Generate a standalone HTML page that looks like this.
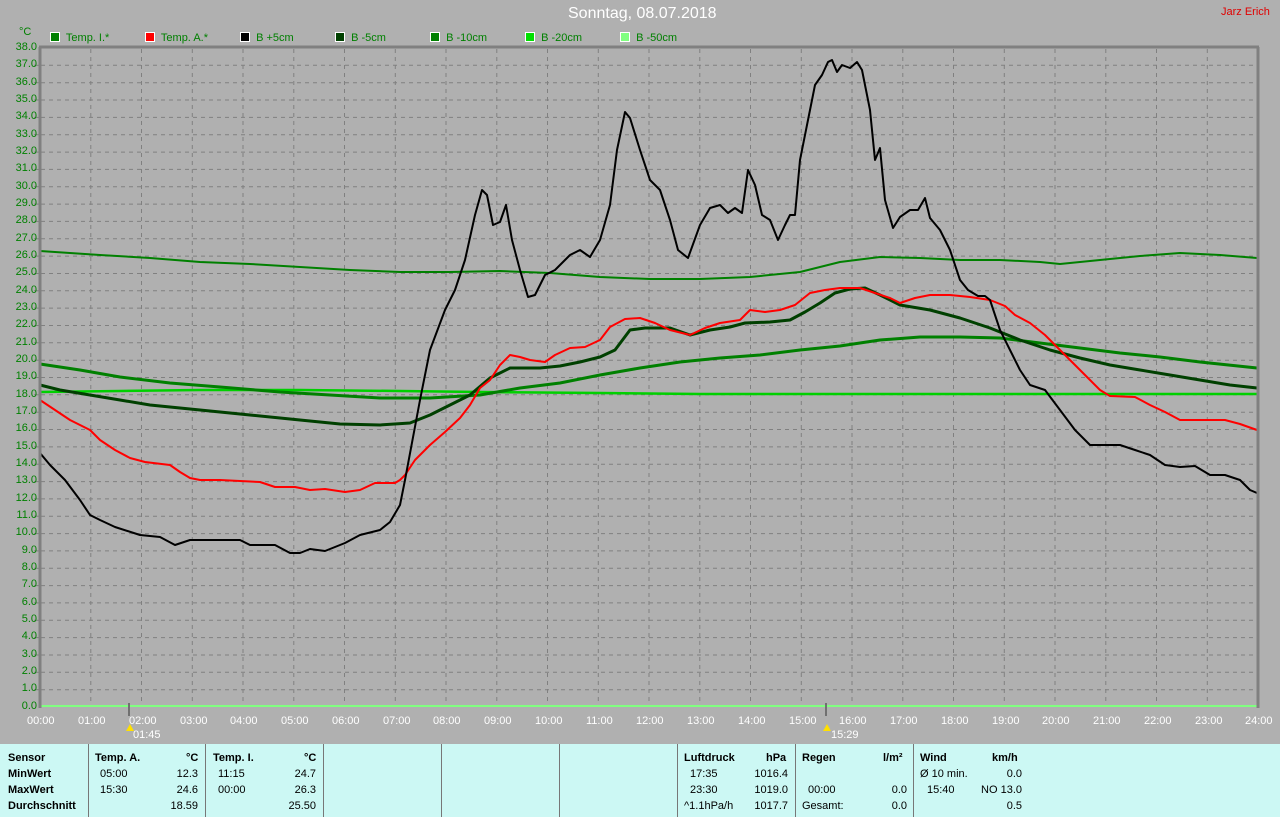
<!DOCTYPE html>
<html><head><meta charset="utf-8"><style>
body{margin:0;width:1280px;height:817px;background:#b0b0b0;overflow:hidden;position:relative;font-family:"Liberation Sans",sans-serif}
.t{position:absolute;font-size:11px;white-space:nowrap}
#bot{position:absolute;left:0;top:744px;width:1280px;height:73px;background:#ccf8f4;font-size:11px}
.sep{position:absolute;top:0;width:1px;height:73px;background:#777}
.c{position:absolute;white-space:nowrap}
.b{font-weight:bold}
</style></head><body>
<div class="t" style="left:568px;top:5px;font-size:16px;color:#fff">Sonntag, 08.07.2018</div>
<div class="t" style="left:1221px;top:6px;color:#e00000">Jarz Erich</div>
<div class="t" style="left:19px;top:26px;color:#008000">°C</div>
<svg width="1280" height="817" style="position:absolute;left:0;top:0" id="s">
<g id="g"></g>
<g fill="none" stroke-linejoin="round">
<polyline stroke="#80ff80" stroke-width="2" points="41,706 1257,706"/>
<polyline stroke="#00d000" stroke-width="2.5" points="40,392 120,391 200,390 300,390 400,391 480,392 600,393 700,394 1257,394"/>
<polyline stroke="#008000" stroke-width="3" points="40,364 80,370 120,377 170,383 220,387 280,392 330,395 380,398 430,398 480,395 520,388 560,383 600,375 640,368 680,362 720,358 760,355 800,350 840,346 880,340 920,337 960,337 1000,338 1040,343 1080,348 1120,353 1160,357 1200,362 1257,368"/>
<polyline stroke="#008000" stroke-width="2" points="40,251 100,255 150,258 200,262 250,264 300,267 350,270 400,272 450,272 500,271 550,273 600,277 650,279 700,279 750,277 800,272 840,262 880,257 920,258 960,260 1000,260 1040,262 1060,264 1100,260 1140,256 1180,253 1220,255 1257,258"/>
<polyline stroke="#004000" stroke-width="3" points="40,385 60,390 90,395 120,400 150,405 200,410 250,415 300,420 340,424 380,425 410,423 430,415 450,405 470,395 490,378 510,368 540,368 560,366 580,362 600,357 615,350 630,330 645,328 670,328 690,335 710,330 730,327 745,323 770,322 790,320 805,312 820,303 835,293 850,289 865,288 880,295 900,305 930,310 960,318 990,328 1020,340 1050,350 1080,358 1110,365 1140,370 1170,375 1200,380 1230,385 1257,388"/>
<polyline stroke="#ff0000" stroke-width="2" points="40,400 55,410 70,420 90,430 100,440 115,450 130,458 145,462 170,465 180,472 190,478 200,480 220,480 240,481 260,482 275,487 295,487 310,490 325,489 345,492 360,490 375,483 395,483 400,480 405,475 415,460 430,445 445,432 460,418 470,405 480,388 490,380 500,365 510,355 520,357 530,360 545,362 555,355 570,348 585,347 600,340 610,327 625,319 640,318 655,323 670,330 690,335 705,328 720,323 740,320 750,310 765,312 780,310 795,305 810,293 825,290 840,288 860,288 875,293 890,298 900,303 915,298 930,295 950,295 970,297 990,300 1005,306 1015,315 1030,323 1045,335 1060,350 1075,365 1090,380 1100,390 1110,396 1135,397 1150,405 1165,412 1180,420 1210,420 1225,420 1240,424 1257,430"/>
<polyline stroke="#000" stroke-width="2" points="40,453 50,465 65,480 80,500 90,515 100,520 115,527 140,535 160,537 175,545 190,540 240,540 250,545 275,545 290,553 300,553 310,549 325,551 345,543 360,535 380,530 390,522 400,505 405,480 420,400 430,350 445,310 450,300 455,290 465,260 475,215 482,190 487,195 493,225 500,222 506,205 512,240 520,270 528,297 535,295 545,275 555,270 570,255 580,250 590,257 600,240 610,205 617,150 625,112 630,118 640,150 650,180 660,190 670,220 678,250 688,258 700,225 710,208 720,205 728,213 735,208 742,213 748,170 755,185 762,215 770,220 778,240 785,225 790,215 795,215 800,160 808,120 815,85 822,75 828,62 832,60 837,72 842,65 850,68 857,62 862,70 870,110 875,160 880,148 885,200 893,228 900,217 910,210 918,210 925,198 930,218 940,230 950,250 960,280 968,290 978,296 985,296 990,300 1000,330 1010,350 1020,370 1030,385 1045,390 1060,410 1075,430 1090,445 1120,445 1135,450 1150,455 1165,465 1180,467 1195,466 1210,475 1225,475 1240,480 1250,490 1257,493"/>
</g>
<g stroke="#808080" stroke-width="3" fill="none"><line x1="40" y1="47" x2="40" y2="708"/><line x1="39" y1="47" x2="1259" y2="47"/><line x1="1258" y1="47" x2="1258" y2="708"/></g>
<g stroke="#707070" stroke-width="2"><line x1="129" y1="703" x2="129" y2="716"/><line x1="826" y1="703" x2="826" y2="716"/></g>
<polygon points="126,731 130,724 134,731" fill="#ffe000"/><polygon points="823,731 827,724 831,731" fill="#ffe000"/>
<g font-family="Liberation Sans" font-size="11">
<g fill="#fff"><text x="133" y="738">01:45</text><text x="831" y="738">15:29</text></g>
</g>
</svg>
<div id="lab"></div>
<div class="t" style="left:50px;top:32px;color:#008000"><span style="display:inline-block;width:8px;height:8px;background:#008000;border:1px solid #fff;vertical-align:-1px"></span>&nbsp; Temp. I.*</div>
<div class="t" style="left:145px;top:32px;color:#008000"><span style="display:inline-block;width:8px;height:8px;background:#f00;border:1px solid #fff;vertical-align:-1px"></span>&nbsp; Temp. A.*</div>
<div class="t" style="left:240px;top:32px;color:#008000"><span style="display:inline-block;width:8px;height:8px;background:#000;border:1px solid #fff;vertical-align:-1px"></span>&nbsp; B +5cm</div>
<div class="t" style="left:335px;top:32px;color:#008000"><span style="display:inline-block;width:8px;height:8px;background:#004000;border:1px solid #fff;vertical-align:-1px"></span>&nbsp; B -5cm</div>
<div class="t" style="left:430px;top:32px;color:#008000"><span style="display:inline-block;width:8px;height:8px;background:#008000;border:1px solid #fff;vertical-align:-1px"></span>&nbsp; B -10cm</div>
<div class="t" style="left:525px;top:32px;color:#008000"><span style="display:inline-block;width:8px;height:8px;background:#00e000;border:1px solid #fff;vertical-align:-1px"></span>&nbsp; B -20cm</div>
<div class="t" style="left:620px;top:32px;color:#008000"><span style="display:inline-block;width:8px;height:8px;background:#80ff80;border:1px solid #fff;vertical-align:-1px"></span>&nbsp; B -50cm</div>
<div style="position:absolute;left:0;top:0;width:37px;color:#008000;font-size:11px;text-align:right">
<div style="position:absolute;right:0;top:41px">38.0</div><div style="position:absolute;right:0;top:58px">37.0</div><div style="position:absolute;right:0;top:76px">36.0</div><div style="position:absolute;right:0;top:93px">35.0</div><div style="position:absolute;right:0;top:110px">34.0</div><div style="position:absolute;right:0;top:128px">33.0</div><div style="position:absolute;right:0;top:145px">32.0</div><div style="position:absolute;right:0;top:162px">31.0</div><div style="position:absolute;right:0;top:180px">30.0</div><div style="position:absolute;right:0;top:197px">29.0</div><div style="position:absolute;right:0;top:214px">28.0</div><div style="position:absolute;right:0;top:232px">27.0</div><div style="position:absolute;right:0;top:249px">26.0</div><div style="position:absolute;right:0;top:266px">25.0</div><div style="position:absolute;right:0;top:284px">24.0</div><div style="position:absolute;right:0;top:301px">23.0</div><div style="position:absolute;right:0;top:318px">22.0</div><div style="position:absolute;right:0;top:336px">21.0</div><div style="position:absolute;right:0;top:353px">20.0</div><div style="position:absolute;right:0;top:370px">19.0</div><div style="position:absolute;right:0;top:388px">18.0</div><div style="position:absolute;right:0;top:405px">17.0</div><div style="position:absolute;right:0;top:422px">16.0</div><div style="position:absolute;right:0;top:440px">15.0</div><div style="position:absolute;right:0;top:457px">14.0</div><div style="position:absolute;right:0;top:474px">13.0</div><div style="position:absolute;right:0;top:492px">12.0</div><div style="position:absolute;right:0;top:509px">11.0</div><div style="position:absolute;right:0;top:526px">10.0</div><div style="position:absolute;right:0;top:544px">9.0</div><div style="position:absolute;right:0;top:561px">8.0</div><div style="position:absolute;right:0;top:578px">7.0</div><div style="position:absolute;right:0;top:596px">6.0</div><div style="position:absolute;right:0;top:613px">5.0</div><div style="position:absolute;right:0;top:630px">4.0</div><div style="position:absolute;right:0;top:648px">3.0</div><div style="position:absolute;right:0;top:665px">2.0</div><div style="position:absolute;right:0;top:682px">1.0</div><div style="position:absolute;right:0;top:700px">0.0</div>
</div>
<div style="position:absolute;left:0;top:715px;color:#fff;font-size:11px">
<span style="position:absolute;left:27px">00:00</span><span style="position:absolute;left:78px">01:00</span><span style="position:absolute;left:129px">02:00</span><span style="position:absolute;left:180px">03:00</span><span style="position:absolute;left:230px">04:00</span><span style="position:absolute;left:281px">05:00</span><span style="position:absolute;left:332px">06:00</span><span style="position:absolute;left:383px">07:00</span><span style="position:absolute;left:433px">08:00</span><span style="position:absolute;left:484px">09:00</span><span style="position:absolute;left:535px">10:00</span><span style="position:absolute;left:586px">11:00</span><span style="position:absolute;left:636px">12:00</span><span style="position:absolute;left:687px">13:00</span><span style="position:absolute;left:738px">14:00</span><span style="position:absolute;left:789px">15:00</span><span style="position:absolute;left:839px">16:00</span><span style="position:absolute;left:890px">17:00</span><span style="position:absolute;left:941px">18:00</span><span style="position:absolute;left:992px">19:00</span><span style="position:absolute;left:1042px">20:00</span><span style="position:absolute;left:1093px">21:00</span><span style="position:absolute;left:1144px">22:00</span><span style="position:absolute;left:1195px">23:00</span><span style="position:absolute;left:1245px">24:00</span>
</div>
<div id="bot">
<div class="sep" style="left:88px"></div><div class="sep" style="left:205px"></div><div class="sep" style="left:323px"></div><div class="sep" style="left:441px"></div><div class="sep" style="left:559px"></div><div class="sep" style="left:677px"></div><div class="sep" style="left:795px"></div><div class="sep" style="left:913px"></div>
<div class="c b" style="left:8px;top:8px">Sensor</div><div class="c b" style="left:8px;top:24px">MinWert</div><div class="c b" style="left:8px;top:40px">MaxWert</div><div class="c b" style="left:8px;top:56px">Durchschnitt</div>
<div class="c b" style="left:95px;top:8px">Temp. A.</div><div class="c b" style="left:186px;top:8px">°C</div>
<div class="c" style="left:100px;top:24px">05:00</div><div class="c" style="right:1082px;top:24px">12.3</div>
<div class="c" style="left:100px;top:40px">15:30</div><div class="c" style="right:1082px;top:40px">24.6</div>
<div class="c" style="right:1082px;top:56px">18.59</div>
<div class="c b" style="left:213px;top:8px">Temp. I.</div><div class="c b" style="left:304px;top:8px">°C</div>
<div class="c" style="left:218px;top:24px">11:15</div><div class="c" style="right:964px;top:24px">24.7</div>
<div class="c" style="left:218px;top:40px">00:00</div><div class="c" style="right:964px;top:40px">26.3</div>
<div class="c" style="right:964px;top:56px">25.50</div>
<div class="c b" style="left:684px;top:8px">Luftdruck</div><div class="c b" style="left:766px;top:8px">hPa</div>
<div class="c" style="left:690px;top:24px">17:35</div><div class="c" style="right:492px;top:24px">1016.4</div>
<div class="c" style="left:690px;top:40px">23:30</div><div class="c" style="right:492px;top:40px">1019.0</div>
<div class="c" style="left:684px;top:56px">^1.1hPa/h</div><div class="c" style="right:492px;top:56px">1017.7</div>
<div class="c b" style="left:802px;top:8px">Regen</div><div class="c b" style="left:883px;top:8px">l/m²</div>
<div class="c" style="left:808px;top:40px">00:00</div><div class="c" style="right:373px;top:40px">0.0</div>
<div class="c" style="left:802px;top:56px">Gesamt:</div><div class="c" style="right:373px;top:56px">0.0</div>
<div class="c b" style="left:920px;top:8px">Wind</div><div class="c b" style="left:992px;top:8px">km/h</div>
<div class="c" style="left:920px;top:24px">Ø 10 min.</div><div class="c" style="right:258px;top:24px">0.0</div>
<div class="c" style="left:927px;top:40px">15:40</div><div class="c" style="right:258px;top:40px">NO 13.0</div>
<div class="c" style="right:258px;top:56px">0.5</div>
</div>
<script>
var g=document.getElementById('g'),h='';
for(var i=1;i<38;i++){var y=(707-i*17.342).toFixed(1);h+='<line x1="41" y1="'+y+'" x2="1257" y2="'+y+'"/>';h+='<line x1="34" y1="'+y+'" x2="40" y2="'+y+'" stroke-dasharray="none"/>';}
for(var j=1;j<24;j++){var x=(40+j*50.75).toFixed(1);h+='<line x1="'+x+'" y1="49" x2="'+x+'" y2="706"/>';}
g.setAttribute('stroke','#808080');g.setAttribute('stroke-dasharray','4,4');g.innerHTML=h;
</script>
</body></html>
